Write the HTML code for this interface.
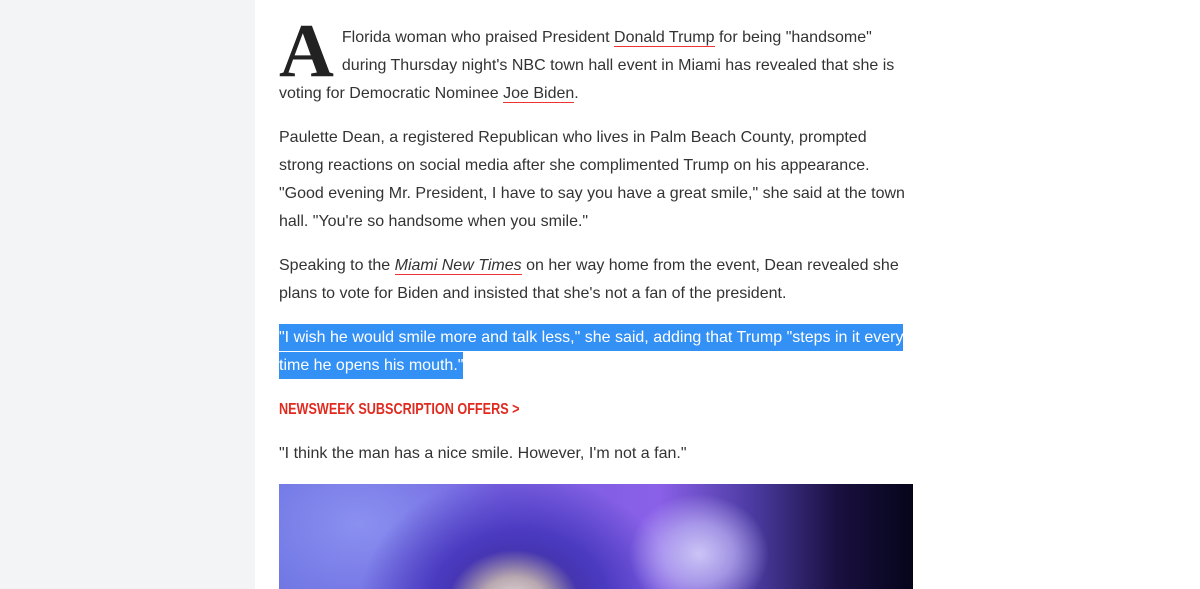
<!DOCTYPE html>
<html><head><style>
html,body{margin:0;padding:0;background:#fff;width:1200px;height:589px;overflow:hidden}
.side{position:absolute;left:0;top:0;width:255px;height:589px;background:#f3f4f6}
.col{position:absolute;left:279px;top:24px;width:634px;font-family:"Liberation Sans",Arial,sans-serif;font-size:16px;line-height:28px;color:#333}
p{margin:0 0 16px 0}
a{color:#333;text-decoration:none;border-bottom:1px solid #e33}
.drop{float:left;font-family:"Liberation Serif",serif;font-weight:bold;font-size:76px;line-height:54px;margin:0 8px 0 0;color:#222;height:50px;overflow:visible}
.hl{background:#3390f5;color:#fff;padding:5px 0 5px;-webkit-box-decoration-break:clone;box-decoration-break:clone}
.sub{font-family:"Liberation Sans",sans-serif;font-weight:bold;font-size:16px;color:#e12a1f;transform:scaleX(0.79);transform-origin:left;margin:0 0 16px;white-space:nowrap}
.img{position:absolute;left:279px;top:484px;width:634px;height:105px;overflow:hidden;
background:
radial-gradient(ellipse 70px 60px at 420px 70px,#cbc4f6 0%,rgba(190,180,245,.7) 50%,rgba(160,140,240,0) 100%),
radial-gradient(ellipse 110px 90px at 235px 120px,#e8e2dc 0%,#b8a8b0 30%,rgba(80,50,150,0) 60%),
radial-gradient(ellipse 160px 130px at 240px 120px,#3a2a8a 0%,#4a3ac0 55%,rgba(90,80,220,0) 100%),
radial-gradient(ellipse 150px 110px at 80px 40px,#8a90f0 0%,rgba(110,110,230,0) 100%),
linear-gradient(90deg,#6870e0 0%,#7a5ee0 40%,#8a60e8 60%,#4a3aa0 75%,#1a1040 88%,#05051a 100%)}
</style></head><body>
<div class="side"></div>
<div class="col">
<p><span class="drop">A</span>Florida woman who praised President <a>Donald Trump</a> for being "handsome" during Thursday night's NBC town hall event in Miami has revealed that she is voting for Democratic Nominee <a>Joe Biden</a>.</p>
<p>Paulette Dean, a registered Republican who lives in Palm Beach County, prompted strong reactions on social media after she complimented Trump on his appearance. "Good evening Mr. President, I have to say you have a great smile," she said at the town hall. "You're so handsome when you smile."</p>
<p>Speaking to the <a><i>Miami New Times</i></a> on her way home from the event, Dean revealed she plans to vote for Biden and insisted that she's not a fan of the president.</p>
<p><span class="hl">"I wish he would smile more and talk less," she said, adding that Trump "steps in it every time he opens his mouth."</span></p>
<div class="sub">NEWSWEEK SUBSCRIPTION OFFERS &gt;</div>
<p>"I think the man has a nice smile. However, I'm not a fan."</p>
</div>
<div class="img"></div>
</body></html>
